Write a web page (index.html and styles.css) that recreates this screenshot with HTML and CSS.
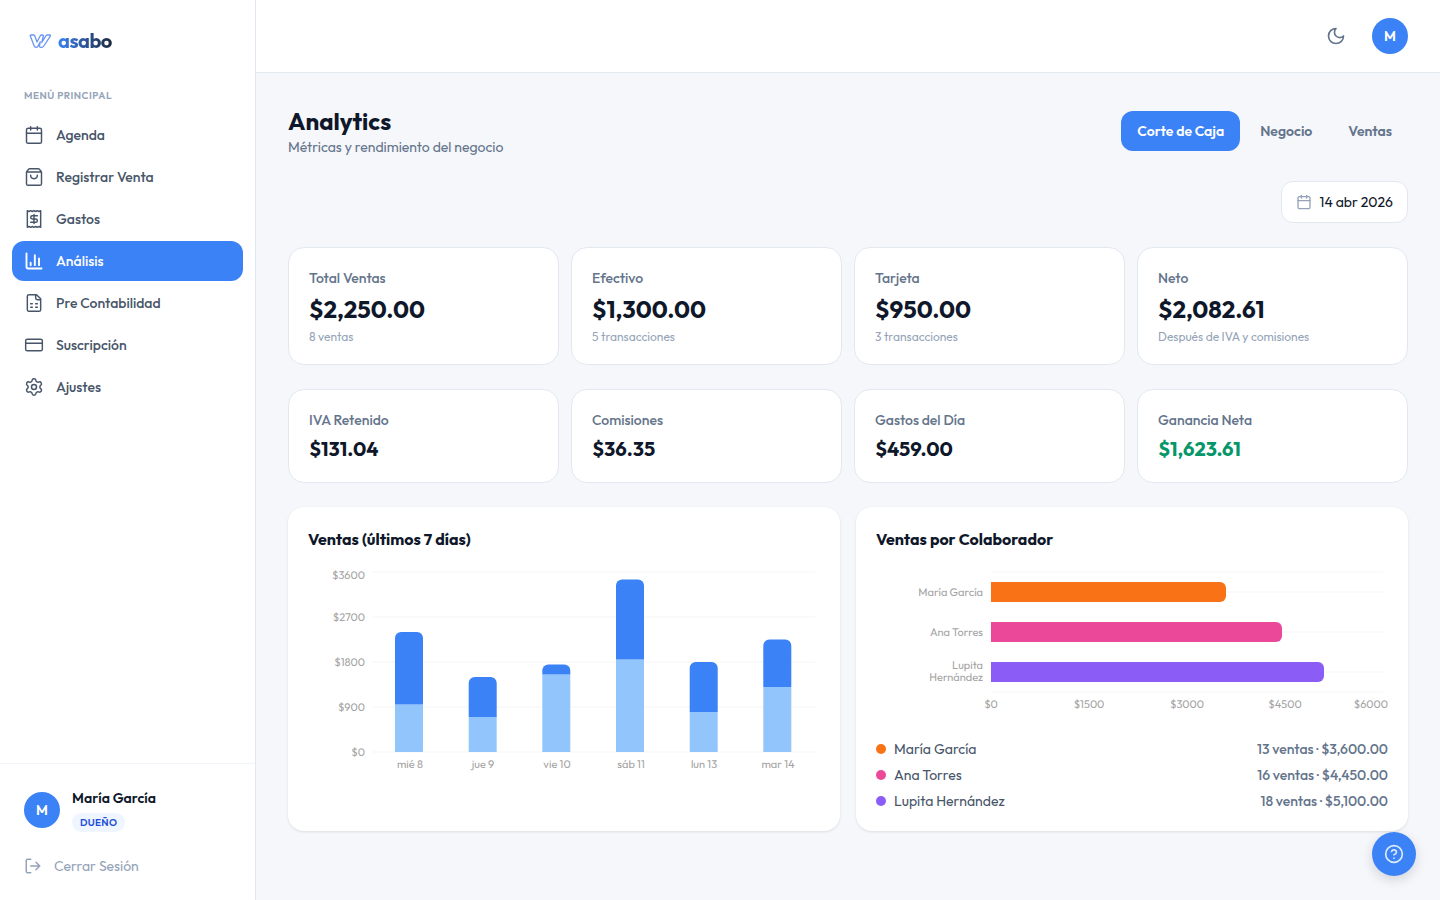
FILE: index.html
```html
<!DOCTYPE html>
<html lang="es">
  <head>
    <meta charset="utf-8" />
    <meta name="viewport" content="width=device-width, initial-scale=1" />
    <link rel="stylesheet" href="styles.css">
    <title>Wasabo - Analytics</title>
  </head>
  <body>
    <aside class="sidebar">
      <a class="logo" href="#">
        <svg class="logo-mark" viewBox="0 0 24 16" aria-hidden="true">
          <path d="M3 2h2.500c.6 0 1 .3 1.200.8l2.300 6.200 3.300-6.200c.3-.5.7-.8 1.300-.8h.9c.8 0 1 .5.8 1.200l-1.500 6.300 4.200-6.900c.3-.4.700-.6 1.200-.6h2.500c.8 0 1 .5.6 1.100l-6.500 9.900c-.6.900-1.200 1.300-2.100 1.300h-.8c-1.200 0-1.600-.7-1.400-1.800l.8-3.600-2.300 4.200c-.5.8-1.100 1.200-1.900 1.200-1 0-1.600-.5-2-1.500L2.300 3.100C2.100 2.500 2.300 2 3 2z" />
        </svg>
        <span class="logo-text">asabo</span>
      </a>

      <div class="menu-title">Menú principal</div>
      <nav class="menu">
        <a href="#" class="menu-item">
          <svg class="icon" viewBox="0 0 24 24"><path d="M8 2v4M16 2v4M3 10h18" /><rect x="3" y="4" width="18" height="18" rx="2" /></svg>
          Agenda
        </a>
        <a href="#" class="menu-item">
          <svg class="icon" viewBox="0 0 24 24"><path d="M16 10a4 4 0 0 1-8 0M3.103 6.034h17.794M3.400 5.467a2 2 0 0 0-.4 1.200V20a2 2 0 0 0 2 2h14a2 2 0 0 0 2-2V6.667a2 2 0 0 0-.4-1.200l-2-2.667A2 2 0 0 0 17 2H7a2 2 0 0 0-1.600.8z" /></svg>
          Registrar Venta
        </a>
        <a href="#" class="menu-item">
          <svg class="icon" viewBox="0 0 24 24"><path d="M4 2v20l2-1 2 1 2-1 2 1 2-1 2 1 2-1 2 1V2l-2 1-2-1-2 1-2-1-2 1-2-1-2 1ZM16 8h-6a2 2 0 1 0 0 4h4a2 2 0 1 1 0 4H8M12 17.500v-11" /></svg>
          Gastos
        </a>
        <a href="#" class="menu-item active" aria-current="page">
          <svg class="icon" viewBox="0 0 24 24"><path d="M3 3v16a2 2 0 0 0 2 2h16M18 17V9M13 17V5M8 17v-3" /></svg>
          Análisis
        </a>
        <a href="#" class="menu-item">
          <svg class="icon" viewBox="0 0 24 24"><path d="M15 2H6a2 2 0 0 0-2 2v16a2 2 0 0 0 2 2h12a2 2 0 0 0 2-2V7ZM14 2v4a2 2 0 0 0 2 2h4M8 13h2M14 13h2M8 17h2M14 17h2" /></svg>
          Pre Contabilidad
        </a>
        <a href="#" class="menu-item">
          <svg class="icon" viewBox="0 0 24 24"><rect x="2" y="5" width="20" height="14" rx="2" /><path d="M2 10h20" /></svg>
          Suscripción
        </a>
        <a href="#" class="menu-item">
          <svg class="icon" viewBox="0 0 24 24"><path d="M9.671 4.136a2.340 2.340 0 0 1 4.659 0 2.340 2.340 0 0 0 3.319 1.915 2.340 2.340 0 0 1 2.330 4.033 2.340 2.340 0 0 0 0 3.831 2.340 2.340 0 0 1-2.330 4.033 2.340 2.340 0 0 0-3.319 1.915 2.340 2.340 0 0 1-4.659 0 2.340 2.340 0 0 0-3.320-1.915 2.340 2.340 0 0 1-2.330-4.033 2.340 2.340 0 0 0 0-3.831A2.340 2.340 0 0 1 6.350 6.051a2.340 2.340 0 0 0 3.319-1.915" /><circle cx="12" cy="12" r="3" /></svg>
          Ajustes
        </a>
      </nav>

      <div class="sidebar-footer">
        <div class="user">
          <div class="avatar">M</div>
          <div>
            <div class="user-name">María García</div>
            <div class="badge">DUEÑO</div>
          </div>
        </div>
        <button type="button" class="logout">
          <svg class="icon icon-md" viewBox="0 0 24 24"><path d="M9 21H5a2 2 0 0 1-2-2V5a2 2 0 0 1 2-2h4M16 17l5-5-5-5M21 12H9" /></svg>
          Cerrar Sesión
        </button>
      </div>
    </aside>

    <div class="page">
      <header class="topbar">
        <button type="button" class="theme-toggle" aria-label="Cambiar tema">
          <svg class="icon" viewBox="0 0 24 24"><path d="M12 3a6 6 0 0 0 9 9 9 9 0 1 1-9-9Z" /></svg>
        </button>
        <button type="button" class="avatar" aria-label="Perfil">M</button>
      </header>

      <main class="content">
        <div class="page-header">
          <div>
            <h1>Analytics</h1>
            <p class="subtitle">Métricas y rendimiento del negocio</p>
          </div>
          <div class="tabs">
            <button type="button" class="tab active">Corte de Caja</button>
            <button type="button" class="tab">Negocio</button>
            <button type="button" class="tab">Ventas</button>
          </div>
        </div>

        <button type="button" class="date-picker">
          <svg class="icon icon-sm" viewBox="0 0 24 24"><path d="M8 2v4M16 2v4M3 10h18" /><rect x="3" y="4" width="18" height="18" rx="2" /></svg>
          14 abr 2026
        </button>

        <section class="stats">
          <div class="card">
            <div class="card-label">Total Ventas</div>
            <div class="card-value">$2,250.00</div>
            <div class="card-note">8 ventas</div>
          </div>
          <div class="card">
            <div class="card-label">Efectivo</div>
            <div class="card-value">$1,300.00</div>
            <div class="card-note">5 transacciones</div>
          </div>
          <div class="card">
            <div class="card-label">Tarjeta</div>
            <div class="card-value">$950.00</div>
            <div class="card-note">3 transacciones</div>
          </div>
          <div class="card">
            <div class="card-label">Neto</div>
            <div class="card-value">$2,082.61</div>
            <div class="card-note">Después de IVA y comisiones</div>
          </div>
        </section>

        <section class="stats stats-small">
          <div class="card">
            <div class="card-label">IVA Retenido</div>
            <div class="card-value">$131.04</div>
          </div>
          <div class="card">
            <div class="card-label">Comisiones</div>
            <div class="card-value">$36.35</div>
          </div>
          <div class="card">
            <div class="card-label">Gastos del Día</div>
            <div class="card-value">$459.00</div>
          </div>
          <div class="card">
            <div class="card-label">Ganancia Neta</div>
            <div class="card-value positive">$1,623.61</div>
          </div>
        </section>

        <section class="charts">
          <div class="panel">
            <h2>Ventas (últimos 7 días)</h2>
            <svg class="chart" viewBox="0 0 512 220" role="img" aria-label="Ventas de los últimos 7 días">
              <path class="grid" d="M65 5H507M65 50H507M65 95H507M65 140H507M65 185H507" />
              <g class="tick tick-end">
                <text x="57" y="12">$3600</text>
                <text x="57" y="54">$2700</text>
                <text x="57" y="99">$1800</text>
                <text x="57" y="144">$900</text>
                <text x="57" y="189">$0</text>
              </g>
              <g class="bar-cash">
                <rect x="87" y="137.500" width="28" height="47.500" />
                <rect x="160.700" y="150" width="28" height="35" />
                <rect x="234.300" y="107.500" width="28" height="77.500" />
                <rect x="308" y="92.500" width="28" height="92.500" />
                <rect x="381.700" y="145" width="28" height="40" />
                <rect x="455.300" y="120" width="28" height="65" />
              </g>
              <g class="bar-card">
                <path d="M87 137.500V71a6 6 0 0 1 6-6h16a6 6 0 0 1 6 6v66.500z" />
                <path d="M160.700 150v-34a6 6 0 0 1 6-6h16a6 6 0 0 1 6 6v34z" />
                <path d="M234.300 107.500v-4a6 6 0 0 1 6-6h16a6 6 0 0 1 6 6v4z" />
                <path d="M308 92.500v-74a6 6 0 0 1 6-6h16a6 6 0 0 1 6 6v74z" />
                <path d="M381.700 145v-44a6 6 0 0 1 6-6h16a6 6 0 0 1 6 6v44z" />
                <path d="M455.300 120V78.500a6 6 0 0 1 6-6h16a6 6 0 0 1 6 6V120z" />
              </g>
              <g class="tick tick-middle">
                <text x="102" y="201">mié 8</text>
                <text x="175" y="201">jue 9</text>
                <text x="249" y="201">vie 10</text>
                <text x="323" y="201">sáb 11</text>
                <text x="396" y="201">lun 13</text>
                <text x="470" y="201">mar 14</text>
              </g>
            </svg>
          </div>

          <div class="panel">
            <h2>Ventas por Colaborador</h2>
            <svg class="chart" viewBox="0 0 512 160" role="img" aria-label="Ventas por colaborador">
              <path class="grid" d="M115 5H507M115 25H507M115 65H507M115 105H507M115 125H507" />
              <path class="fill-orange" d="M115 15h229a6 6 0 0 1 6 6v8a6 6 0 0 1-6 6H115z" />
              <path class="fill-pink" d="M115 55h285a6 6 0 0 1 6 6v8a6 6 0 0 1-6 6H115z" />
              <path class="fill-purple" d="M115 95h327a6 6 0 0 1 6 6v8a6 6 0 0 1-6 6H115z" />
              <g class="tick tick-end">
                <text x="107" y="29">María García</text>
                <text x="107" y="69">Ana Torres</text>
                <text x="107" y="102">Lupita</text>
                <text x="107" y="114">Hernández</text>
                <text x="512" y="141">$6000</text>
              </g>
              <g class="tick tick-middle">
                <text x="115" y="141">$0</text>
                <text x="213" y="141">$1500</text>
                <text x="311" y="141">$3000</text>
                <text x="409" y="141">$4500</text>
              </g>
            </svg>
            <ul class="legend">
              <li><span class="dot dot-orange"></span>María García<span class="legend-value">13 ventas · $3,600.00</span></li>
              <li><span class="dot dot-pink"></span>Ana Torres<span class="legend-value">16 ventas · $4,450.00</span></li>
              <li><span class="dot dot-purple"></span>Lupita Hernández<span class="legend-value">18 ventas · $5,100.00</span></li>
            </ul>
          </div>
        </section>
      </main>
    </div>

    <button type="button" class="help" aria-label="Ayuda">
      <svg class="icon" viewBox="0 0 24 24"><circle cx="12" cy="12" r="10" /><path d="M9.090 9a3 3 0 0 1 5.830 1c0 2-3 3-3 3M12 17h.01" /></svg>
    </button>
  </body>
</html>
```
FILE: styles.css
```css
* {
  box-sizing: border-box;
}
body {
  margin: 0;
  display: flex;
  min-height: 100vh;
  font-family: "Outfit", "Lato", sans-serif;
  font-size: 14px;
  line-height: 20px;
  color: #0f172a;
  background-color: #f5f7fb;
}
h1,
h2,
p,
ul {
  margin: 0;
  padding: 0;
}
button {
  font: inherit;
  border: 0;
  padding: 0;
  background: none;
  cursor: pointer;
}
a {
  text-decoration: none;
}
.icon {
  width: 20px;
  height: 20px;
  flex: none;
  fill: none;
  stroke: currentColor;
  stroke-width: 2;
  stroke-linecap: round;
  stroke-linejoin: round;
}
.icon-md {
  width: 18px;
  height: 18px;
}
.icon-sm {
  width: 16px;
  height: 16px;
}

/* sidebar */
.sidebar {
  position: sticky;
  top: 0;
  display: flex;
  flex-direction: column;
  flex: none;
  width: 256px;
  height: 100vh;
  background-color: #fff;
  border-right: 1px solid #e2e8f0;
}
.logo {
  display: flex;
  align-items: center;
  gap: 6px;
  padding: 29px 28px 24px;
}
.logo-mark {
  width: 24px;
  height: 16px;
  fill: none;
  stroke: #6b96f2;
  stroke-width: 1.3;
  stroke-linecap: round;
  stroke-linejoin: round;
}
.logo-text {
  font-size: 20px;
  line-height: 24px;
  font-weight: 700;
  letter-spacing: -0.025em;
  color: transparent;
  background: linear-gradient(90deg, #3b82f6, #1e293b);
  background-clip: text;
  -webkit-background-clip: text;
}
.menu-title {
  padding: 9px 24px 7px;
  font-size: 10px;
  line-height: 20px;
  font-weight: 600;
  letter-spacing: 0.05em;
  text-transform: uppercase;
  color: #94a3b8;
}
.menu {
  display: flex;
  flex-direction: column;
  gap: 2px;
  padding: 2px 12px;
  flex: 1;
}
.menu-item {
  display: flex;
  align-items: center;
  gap: 12px;
  padding: 10px 12px;
  border-radius: 12px;
  font-weight: 500;
  color: #475569;
}
.menu-item .icon {
  stroke-width: 1.75;
}
.menu-item.active {
  color: #fff;
  background-color: #3b82f6;
}
.menu-item.active .icon {
  stroke-width: 2.25;
}
.sidebar-footer {
  padding: 12px;
  border-top: 1px solid #f1f5f9;
}
.user {
  display: flex;
  align-items: center;
  gap: 12px;
  padding: 12px;
}
.avatar {
  display: flex;
  align-items: center;
  justify-content: center;
  flex: none;
  width: 36px;
  height: 36px;
  border-radius: 50%;
  font-weight: 600;
  color: #fff;
  background-color: #3b82f6;
}
.user-name {
  font-weight: 600;
}
.badge {
  width: fit-content;
  margin-top: 5px;
  padding: 2px 8px;
  border-radius: 10px;
  font-size: 10px;
  line-height: 15px;
  font-weight: 600;
  letter-spacing: 0.03em;
  color: #1d4ed8;
  background-color: #eff6ff;
}
.logout {
  display: flex;
  align-items: center;
  gap: 12px;
  width: 100%;
  padding: 12px;
  color: #94a3b8;
}

/* top bar */
.page {
  flex: 1;
  min-width: 0;
}
.topbar {
  display: flex;
  align-items: center;
  justify-content: flex-end;
  gap: 16px;
  height: 73px;
  padding: 0 32px;
  background-color: #fff;
  border-bottom: 1px solid #e2e8f0;
}
.theme-toggle {
  display: flex;
  padding: 10px;
  color: #64748b;
}

/* content */
.content {
  display: flex;
  flex-direction: column;
  gap: 24px;
  padding: 32px;
}
.page-header {
  display: flex;
  align-items: center;
  justify-content: space-between;
}
h1 {
  font-size: 24px;
  line-height: 32px;
  font-weight: 700;
}
.subtitle {
  color: #64748b;
}
.tabs {
  display: flex;
  gap: 4px;
}
.tab {
  padding: 10px 16px;
  border-radius: 12px;
  font-weight: 600;
  color: #64748b;
}
.tab.active {
  color: #fff;
  background-color: #3b82f6;
}
.date-picker {
  display: flex;
  align-items: center;
  align-self: flex-end;
  gap: 8px;
  padding: 10px 14px;
  border: 1px solid #e2e8f0;
  border-radius: 12px;
  color: #0f172a;
  background-color: #fff;
}
.date-picker .icon {
  color: #94a3b8;
}
.stats {
  display: grid;
  grid-template-columns: repeat(4, 1fr);
  gap: 12px;
}
.card {
  display: flex;
  flex-direction: column;
  gap: 4px;
  padding: 20px 20px 19px;
  border: 1px solid #e2e8f0;
  border-radius: 16px;
  background-color: #fff;
}
.card-label {
  line-height: 21px;
  font-weight: 500;
  color: #64748b;
}
.card-value {
  font-size: 24px;
  line-height: 32px;
  font-weight: 700;
}
.card-note {
  font-size: 12px;
  line-height: 16px;
  color: #94a3b8;
}
.stats-small .card-value {
  font-size: 20px;
  line-height: 28px;
}
.card-value.positive {
  color: #059669;
}

/* charts */
.charts {
  display: grid;
  grid-template-columns: 1fr 1fr;
  gap: 16px;
}
.panel {
  padding: 20px;
  border-radius: 16px;
  background-color: #fff;
  box-shadow: 0 1px 3px rgba(0, 0, 0, 0.1);
}
h2 {
  margin-bottom: 16px;
  font-size: 16px;
  line-height: 24px;
  font-weight: 700;
}
.chart {
  display: block;
  width: 100%;
  text-rendering: geometricPrecision;
}
.grid {
  stroke: #f5f5f5;
}
.tick {
  font-size: 11px;
  fill: #a3a3a3;
}
.tick-end {
  text-anchor: end;
}
.tick-middle {
  text-anchor: middle;
}
.bar-cash {
  fill: #93c5fd;
}
.bar-card {
  fill: #3b82f6;
}
.fill-orange {
  fill: #f97316;
}
.fill-pink {
  fill: #ec4899;
}
.fill-purple {
  fill: #8b5cf6;
}
.legend {
  display: flex;
  flex-direction: column;
  gap: 6px;
  margin-top: 12px;
  list-style: none;
}
.legend li {
  display: flex;
  align-items: center;
  gap: 8px;
  color: #475569;
}
.legend-value {
  margin-left: auto;
  font-weight: 500;
  color: #64748b;
}
.dot {
  width: 10px;
  height: 10px;
  border-radius: 50%;
}
.dot-orange {
  background-color: #f97316;
}
.dot-pink {
  background-color: #ec4899;
}
.dot-purple {
  background-color: #8b5cf6;
}

.help {
  position: fixed;
  right: 24px;
  bottom: 24px;
  display: flex;
  align-items: center;
  justify-content: center;
  width: 44px;
  height: 44px;
  border-radius: 50%;
  color: #dbeafe;
  background-color: #3b82f6;
  box-shadow: 0 4px 12px rgba(15, 23, 42, 0.15);
}
```
